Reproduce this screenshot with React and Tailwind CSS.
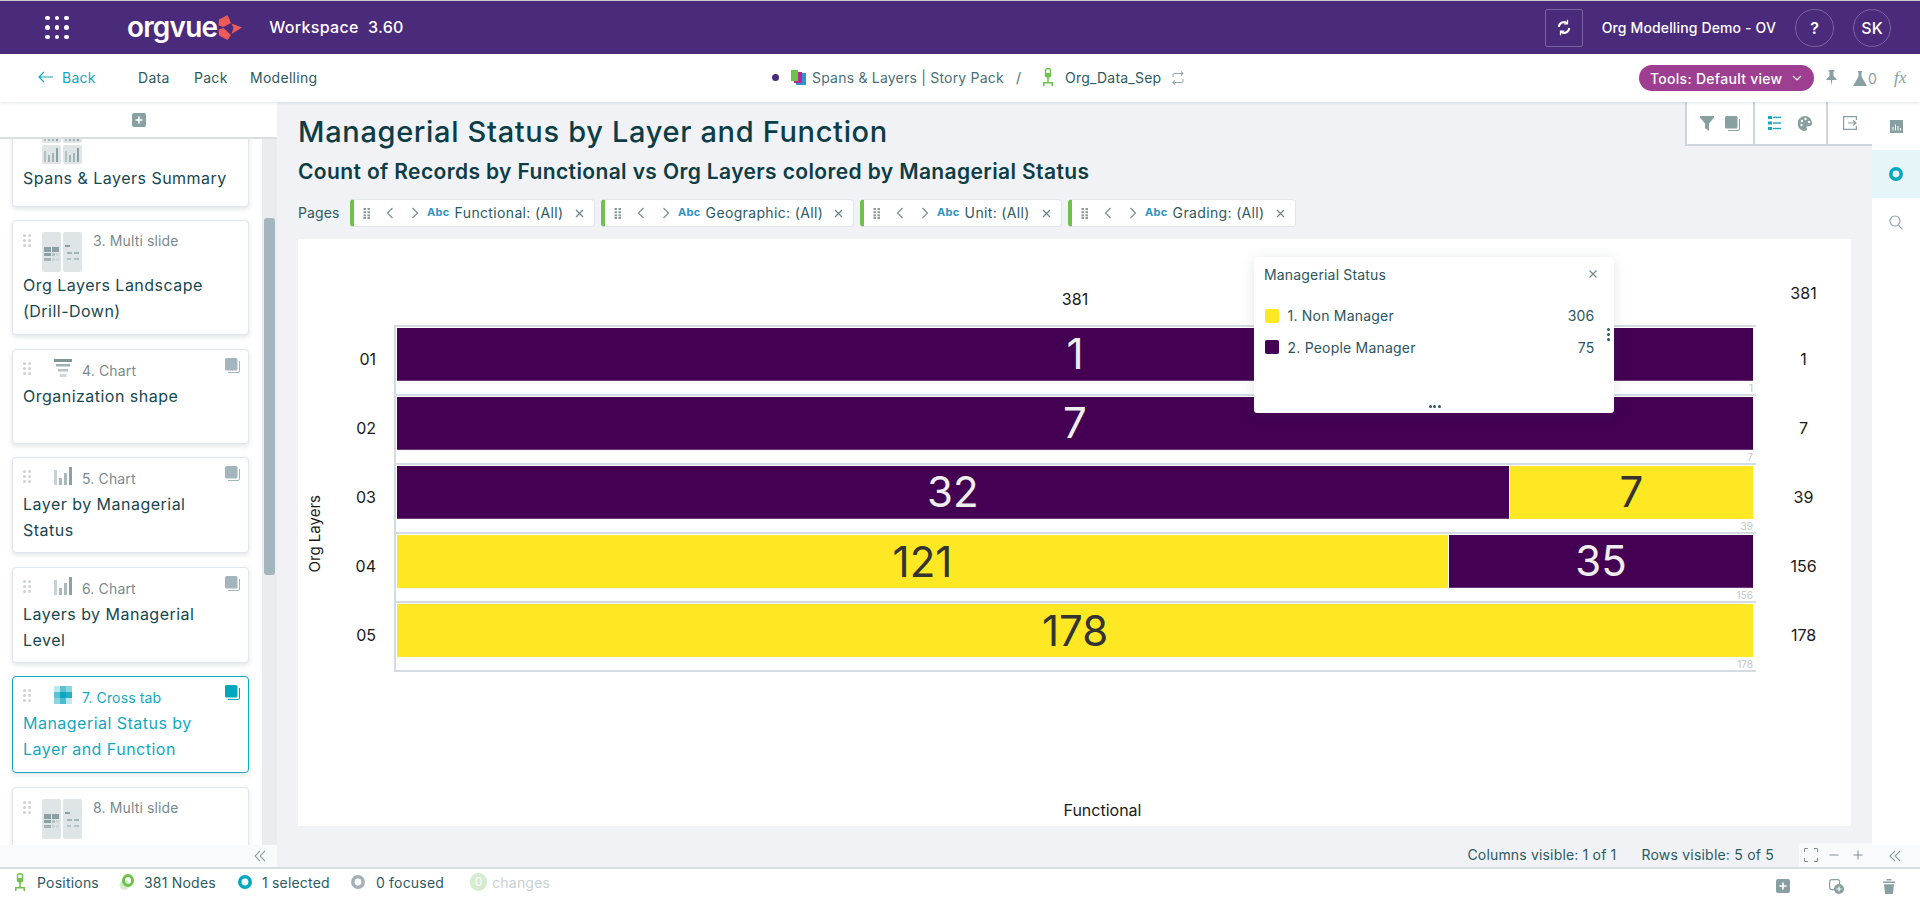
import React from "react";

const Handle = ({ c = "#c9d2d6" }) => (
  <svg width="8" height="13" viewBox="0 0 8 13" className="shrink-0">
    {[1.5, 6.5, 11.5].map((y) => [1.5, 6.5].map((x) => <circle key={x + "-" + y} cx={x} cy={y} r="1.5" fill={c} />))}
  </svg>
);

const Stack = ({ c = "#a3b5bd" }) => (
  <svg width="15" height="15" viewBox="0 0 15 15" className="shrink-0">
    <rect x="0" y="0" width="12.5" height="12.5" rx="1.5" fill={c} />
    <path d="M14.5 3v10a1.5 1.5 0 0 1-1.5 1.5H3" fill="none" stroke={c} strokeWidth="1" />
  </svg>
);

const MultiThumb = () => (
  <svg width="40" height="40" viewBox="0 0 40 40" className="shrink-0">
    <rect x="0" y="0" width="19" height="40" rx="2" fill="#dfe5e7" />
    <rect x="21" y="0" width="19" height="40" rx="2" fill="#dfe5e7" />
    <rect x="2" y="15" width="7" height="5" fill="#8aa0a3" />
    <rect x="10" y="15" width="7" height="5" fill="#8aa0a3" />
    <rect x="2" y="21" width="7" height="3" fill="#8aa0a3" />
    <rect x="10" y="21" width="3" height="3" fill="#b5c2c5" />
    <rect x="14" y="21" width="3" height="3" fill="#cdd6d8" />
    <rect x="2" y="26" width="7" height="3" fill="#a3b3b6" />
    <rect x="10" y="26" width="3" height="3" fill="#cdd6d8" />
    <rect x="14" y="26" width="3" height="3" fill="#cdd6d8" />
    <rect x="23" y="13" width="5" height="2" fill="#8aa0a3" />
    <rect x="25" y="20" width="5" height="2" fill="#a3b3b6" />
    <rect x="32" y="20" width="5" height="2" fill="#a3b3b6" />
    <rect x="25" y="26" width="4" height="2" fill="#b5c2c5" />
    <rect x="32" y="26" width="5" height="2" fill="#b5c2c5" />
  </svg>
);

const SummaryThumb = () => (
  <svg width="40" height="40" viewBox="0 0 40 40" className="shrink-0">
    {[0, 21].map((x) => [0, 21].map((y) => (
      <g key={x + "-" + y}>
        <rect x={x} y={y} width="19" height="19" rx="2" fill="#dfe5e7" />
        <rect x={x + 2} y={y + 6} width="2" height="11" fill="#b5c2c5" />
        <rect x={x + 6} y={y + 10} width="2" height="7" fill="#a3b3b6" />
        <rect x={x + 10} y={y + 8} width="2" height="9" fill="#a3b3b6" />
        <rect x={x + 14} y={y + 3} width="2" height="14" fill="#8aa0a3" />
      </g>
    )))}
  </svg>
);

const FunnelThumb = () => (
  <svg width="18" height="18" viewBox="0 0 18 18" className="shrink-0">
    <rect x="0" y="0" width="18" height="3" fill="#7e9699" />
    <rect x="2" y="5" width="14" height="2.5" fill="#9fb1b4" />
    <rect x="4" y="10" width="10" height="2.5" fill="#b5c3c6" />
    <rect x="5.5" y="15" width="7" height="3" fill="#cdd8da" />
  </svg>
);

const BarsThumb = () => (
  <svg width="18" height="18" viewBox="0 0 18 18" className="shrink-0">
    <rect x="0" y="3" width="3" height="15" fill="#c5d1d4" />
    <rect x="5" y="11" width="3" height="7" fill="#a8b8bb" />
    <rect x="10" y="6" width="3" height="12" fill="#a8b8bb" />
    <rect x="15" y="0" width="3" height="18" fill="#8aa0a3" />
  </svg>
);

const CrossThumb = () => (
  <svg width="18" height="18" viewBox="0 0 18 18" className="shrink-0">
    <rect x="0" y="0" width="18" height="18" fill="#bfe7ee" />
    <rect x="6" y="0" width="6" height="6" fill="#5cc3d4" />
    <rect x="12" y="0" width="6" height="6" fill="#8bd5e1" />
    <rect x="0" y="6" width="6" height="6" fill="#5cc3d4" />
    <rect x="6" y="6" width="6" height="6" fill="#0ea5bd" />
    <rect x="12" y="6" width="6" height="6" fill="#22aec4" />
    <rect x="0" y="12" width="6" height="6" fill="#8bd5e1" />
    <rect x="6" y="12" width="6" height="6" fill="#4bbccf" />
  </svg>
);

const Card = ({ n, thumb, title, h, stack, active, titleCls }) => {
  const color = active ? "text-[#11a9bf]" : "text-[#17474f]";
  return (
    <div className={`w-[237px] shrink-0 bg-white rounded-[4px] border ${active ? "border-[#11a9bf]" : "border-[#e1e7ea]"} shadow-[0_2px_5px_rgba(60,80,90,0.16)] ${h}`}>
      {thumb === "multi" || thumb === "summary" ? (
        <div className="flex items-start pl-[10px] pt-[11px]">
          <div className="w-[8px] mt-[2px] mr-[11px]">{n && <Handle />}</div>
          {thumb === "multi" ? <MultiThumb /> : <SummaryThumb />}
          <span className="ml-[11px] -mt-[1px] text-[14px] leading-[20px] text-[#7a8a8e] tracking-[0.01em]">{n}</span>
        </div>
      ) : (
        <div className="flex items-start pl-[10px] pr-[8px] pt-[8px] h-[33px]">
          <div className="w-[8px] mt-[4px] mr-[23px]"><Handle /></div>
          <div className="mt-[1px]">{thumb}</div>
          <span className={`ml-[10px] text-[14px] leading-[20px] mt-[3px] ${active ? "text-[#11a9bf]" : "text-[#7a8a8e]"} tracking-[0.01em]`}>{n}</span>
          {stack && <div className="ml-auto"><Stack c={active ? "#00a7bd" : "#a3b5bd"} /></div>}
        </div>
      )}
      <div className={`px-[10px] text-[16px] leading-[26px] tracking-[0.03em] ${color} ${titleCls || ""}`}>{title}</div>
    </div>
  );
};

const Chip = ({ label, w }) => (
  <div className={`h-[28px] flex items-center bg-white rounded-[4px] border border-[#e3e7ec] border-l-[4px] border-l-[#6cc24a] ${w}`}>
    <span className="ml-[9px]">
      <svg width="8" height="11" viewBox="0 0 8 11"><g fill="#8a9a9d">{[1, 4.2, 7.4, 10].map((y) => <g key={y}><rect x="0.5" y={y - 1} width="2.5" height="2" /><rect x="4.5" y={y - 1} width="2.5" height="2" /></g>)}</g></svg>
    </span>
    <svg width="8" height="12" viewBox="0 0 8 12" className="ml-[15px]"><path d="M6.5 1 1.5 6l5 5" fill="none" stroke="#7d8f92" strokeWidth="1.2" /></svg>
    <svg width="8" height="12" viewBox="0 0 8 12" className="ml-[17px]"><path d="M1.5 1l5 5-5 5" fill="none" stroke="#7d8f92" strokeWidth="1.2" /></svg>
    <span className="ml-[8px] -mt-[1px] text-[11px] font-bold text-[#2f93c4] tracking-[0.03em]">Abc</span>
    <span className="ml-[5px] -mt-[1px] text-[14px] text-[#2c5a62] tracking-[0.025em] whitespace-nowrap">{label}</span>
    <svg width="9" height="9" viewBox="0 0 9 9" className="ml-auto mr-[10px]"><path d="M1 1l7 7M8 1 1 8" stroke="#6f8488" strokeWidth="1.2" fill="none" /></svg>
  </div>
);

const rows = [
  { label: "01", total: 1, segs: [{ v: 1, k: "p" }] },
  { label: "02", total: 7, segs: [{ v: 7, k: "p" }] },
  { label: "03", total: 39, segs: [{ v: 32, k: "p" }, { v: 7, k: "y" }] },
  { label: "04", total: 156, segs: [{ v: 121, k: "y" }, { v: 35, k: "p" }] },
  { label: "05", total: 178, segs: [{ v: 178, k: "y" }] },
];

const Ring = ({ c }) => (
  <svg width="14" height="14" viewBox="0 0 14 14" className="shrink-0">
    <circle cx="7" cy="7" r="5.2" fill="none" stroke={c} strokeWidth="3.5" />
  </svg>
);

const Chair = () => (
  <svg width="10" height="18" viewBox="0 0 10 18" className="shrink-0">
    <rect x="2.5" y="0.7" width="5" height="8" rx="1.5" fill="none" stroke="#6cc24a" strokeWidth="1.4" />
    <rect x="2.5" y="5" width="5" height="4" fill="#6cc24a" />
    <rect x="4.2" y="9" width="1.6" height="5" fill="#6cc24a" />
    <path d="M0 14h10v1.5H0zM0 15.5h1.5V18H0zM8.5 15.5H10V18H8.5z" fill="#6cc24a" />
  </svg>
);

const Chevrons = () => (
  <svg width="12" height="12" viewBox="0 0 12 12"><path d="M6 1 1 6l5 5M11 1 6 6l5 5" fill="none" stroke="#8aa0a3" strokeWidth="1.1" /></svg>
);

const PlusSquare = () => (
  <svg width="14" height="14" viewBox="0 0 14 14"><rect width="14" height="14" rx="2" fill="#88a0a2" /><path d="M7 3.5v7M3.5 7h7" stroke="#fff" strokeWidth="1.6" /></svg>
);

const Y = "#fee723";

export default function App() {
  return (
    <div className="w-[1920px] h-[902px] overflow-hidden flex flex-col bg-white font-[family-name:Inter,sans-serif] text-[#17474f]">
      <div className="h-px bg-[#c9c9cc] shrink-0" />
      {/* header */}
      <header className="h-[53px] shrink-0 bg-[#4a2a7b] flex items-center text-white">
        <div className="ml-[45px] grid grid-cols-3 gap-x-[5px] gap-y-[5px] w-[24px] shrink-0">
          {Array.from({ length: 9 }).map((_, i) => <span key={i} className="w-[4.6px] h-[4.6px] rounded-full bg-white block" />)}
        </div>
        <span className="ml-[58px] text-[28px] leading-[36px] font-semibold tracking-[-0.03em] -mt-[1px]">orgvue</span>
        <svg width="24" height="25" viewBox="0 0 24 25" className="ml-[1px] -mt-[1px]">
          <path d="M1 4.5 9.5 0 13 8 5.5 12 .5 10.5zM.5 14.5 5.5 13 13 20l-3.5 5L1 20.5zM13.5 8.5 24 12.5 13.5 19 15.5 13z" fill="#ec5b57" />
        </svg>
        <span className="ml-[27px] -mt-[2px] text-[16px] font-medium whitespace-pre tracking-[0.02em]">Workspace  3.60</span>
        <div className="ml-auto w-[38px] h-[38px] border border-[#7a64a0] rounded-[2px] flex items-center justify-center">
          <svg width="14" height="17" viewBox="0 0 14 17" fill="none" stroke="#fff" strokeWidth="2"><path d="M12.2 9a5.2 5.2 0 0 1-8.6 3.6M1.8 8a5.2 5.2 0 0 1 8.6-3.6" /><path d="M10.5 .8v4H6.8M3.5 16.2v-4h3.7" strokeWidth="1.3" /></svg>
        </div>
        <span className="ml-[19px] text-[14px] font-medium tracking-[0.01em] whitespace-nowrap">Org Modelling Demo - OV</span>
        <div className="ml-[19px] w-[39px] h-[38px] rounded-full border border-[#7a64a0] flex items-center justify-center text-[16px] font-semibold">?</div>
        <div className="ml-[19px] mr-[29px] w-[38px] h-[38px] rounded-full border border-[#7a64a0] flex items-center justify-center text-[16px] font-medium">SK</div>
      </header>
      {/* toolbar */}
      <div className="h-[48px] shrink-0 bg-white flex items-center relative z-10 shadow-[0_1px_3px_rgba(40,60,70,0.14)]">
        <svg width="15" height="12" viewBox="0 0 15 12" className="ml-[38px] -mt-[2px]"><path d="M15 6H1M6 1 1 6l5 5" fill="none" stroke="#13a8bf" strokeWidth="1.2" /></svg>
        <span className="ml-[9px] -mt-[2px] text-[14px] text-[#13a8bf] tracking-[0.02em] w-[76px]">Back</span>
        <span className="-mt-[1px] text-[14px] text-[#2c5a62] tracking-[0.02em] w-[56px]">Data</span>
        <span className="-mt-[1px] text-[14px] text-[#2c5a62] tracking-[0.02em] w-[56px]">Pack</span>
        <span className="-mt-[1px] text-[14px] text-[#2c5a62] tracking-[0.02em] w-[522px]">Modelling</span>
        <span className="-mt-[2px] w-[7px] h-[7px] rounded-full bg-[#4a2a7b] shrink-0" />
        <svg width="15" height="15" viewBox="0 0 15 15" className="ml-[12px] -mt-[2px] shrink-0"><rect x="5" y="3" width="10" height="12" fill="#2f93d4" /><rect x="3" y="2" width="8" height="11" fill="#b5288f" /><rect x="0" y="0" width="7" height="11" fill="#6cc24a" /></svg>
        <span className="ml-[6px] -mt-[2px] text-[14px] text-[#4a7077] tracking-[0.015em] whitespace-nowrap w-[204px]">Spans &amp; Layers | Story Pack</span>
        <span className="-mt-[2px] text-[14px] text-[#4a7077] w-[27px]">/</span>
        <div className="-mt-[2px]"><Chair /></div>
        <span className="ml-[12px] -mt-[2px] text-[14px] text-[#2c5a62] tracking-[0.015em]">Org_Data_Sep</span>
        <svg width="12" height="14" viewBox="0 0 12 14" className="ml-[11px] -mt-[1px]" fill="none" stroke="#9aacaf" strokeWidth="1.1"><path d="M1 6V4a1.5 1.5 0 0 1 1.5-1.5H11M9 .5l2 2-2 2M11 8v2a1.5 1.5 0 0 1-1.5 1.5H1M3 9.5l-2 2 2 2" /></svg>
        <div className="ml-auto h-[26px] w-[175px] rounded-full bg-[#9e3e91] text-white text-[14px] font-medium tracking-[0.02em] flex items-center pl-[11px] shrink-0 whitespace-nowrap">
          Tools: Default view
          <svg width="10" height="6" viewBox="0 0 10 6" className="ml-[9px]"><path d="M1 1l4 4 4-4" fill="none" stroke="#fff" strokeWidth="1.2" /></svg>
        </div>
        <svg width="11" height="16" viewBox="0 0 11 16" className="ml-[12px] shrink-0"><path d="M2.5 0h6v1L7.5 2v4l3 3v1H6.2L5.5 16l-.7-6H.5V9l3-3V2l-1-1z" fill="#88a0a2" /></svg>
        <svg width="14" height="15" viewBox="0 0 14 15" className="ml-[16px] shrink-0"><path d="M5 0h4v1L8.5 1.5v4L14 15H0L5.5 5.5v-4L5 1z" fill="#88a0a2" /></svg>
        <span className="ml-[1px] text-[14px] text-[#88a0a2] w-[26px]">0</span>
        <span className="mr-[11px] text-[17px] italic text-[#88a0a2] font-[family-name:'Liberation_Serif',serif] w-[15px]">fx</span>
      </div>
      {/* body */}
      <div className="flex flex-1 min-h-0 bg-[#f0f2f5]">
        {/* sidebar */}
        <aside className="w-[277px] shrink-0 flex flex-col bg-white">
          <div className="h-[37px] shrink-0 flex items-center justify-center border-b-2 border-[#d9dee1]"><PlusSquare /></div>
          <div className="flex-1 min-h-0 flex overflow-hidden">
            <div className="w-[262px] pl-[12px] flex flex-col gap-[13.5px]">
              <div className="-mt-[27.5px]"><Card n="" thumb="summary" h="h-[95px]" title="Spans & Layers Summary" titleCls="mt-[1px]" /></div>
              <Card n="3. Multi slide" thumb="multi" h="h-[115px]" title={<>Org Layers Landscape<br />(Drill-Down)</>} />
              <Card n="4. Chart" thumb={<FunnelThumb />} h="h-[95px]" stack title="Organization shape" />
              <Card n="5. Chart" thumb={<BarsThumb />} h="h-[96px]" stack title={<>Layer by Managerial<br />Status</>} />
              <Card n="6. Chart" thumb={<BarsThumb />} h="h-[96px]" stack title={<>Layers by Managerial<br />Level</>} />
              <Card n="7. Cross tab" thumb={<CrossThumb />} h="h-[97px]" stack active title={<>Managerial Status by<br />Layer and Function</>} />
              <Card n="8. Multi slide" thumb="multi" h="h-[115px]" title="" />
            </div>
            <div className="w-[15px] bg-[#e9edf0] flex justify-center">
              <div className="w-[11px] h-[357px] mt-[79px] bg-[#a3b5bd] rounded-[3px]" />
            </div>
          </div>
          <div className="h-[22px] shrink-0 bg-[#f9fafb] flex items-center justify-end pr-[11px]"><Chevrons /></div>
        </aside>
        {/* main */}
        <main className="flex-1 min-w-0 flex flex-col">
          <div className="h-[48px] flex justify-between items-start pl-[21px] shrink-0">
            <h1 className="mt-[12px] text-[29px] leading-[36px] font-medium tracking-[0.023em] text-[#0d3d47] whitespace-nowrap">Managerial Status by Layer and Function</h1>
            <div className="h-[44px] w-[187px] bg-white border-l-2 border-b-2 border-[#ccd6db] flex items-center">
              <div className="w-[68px] h-full border-r-2 border-[#ccd6db] flex items-center pl-[13px] gap-[11px]">
                <svg width="14" height="15" viewBox="0 0 14 15"><path d="M0 0h14v1.5L9 7.5V15L5 12V7.5L0 1.5z" fill="#88a0a2" /></svg>
                <svg width="15" height="15" viewBox="0 0 15 15"><rect width="12.5" height="12.5" rx="1.5" fill="#88a0a2" /><path d="M14.5 3v10a1.5 1.5 0 0 1-1.5 1.5H3" fill="none" stroke="#88a0a2" /></svg>
              </div>
              <div className="w-[73px] h-full border-r-2 border-[#ccd6db] flex items-center pl-[13px] gap-[17px]">
                <svg width="13" height="14" viewBox="0 0 13 14"><g fill="#13a8bf"><rect y="0" width="4" height="3" /><rect y="5.5" width="4" height="3" /><rect y="11" width="4" height="3" /><rect x="5" y="0.7" width="8" height="1.4" /><rect x="5" y="6.3" width="8" height="1.4" /><rect x="5" y="11.8" width="8" height="1.4" /></g></svg>
                <svg width="14" height="15" viewBox="0 0 14 15"><path d="M7 0a7 7 0 0 1 7 7.3c0 2.2-1.6 3-3 3H9.5c-.9 0-1.2 1-.8 1.7.5 1 .2 3-1.7 3A7 7 0 0 1 7 0z" fill="#88a0a2" /><circle cx="4" cy="5" r="1.2" fill="#fff" /><circle cx="7.5" cy="3" r="1.2" fill="#fff" /><circle cx="11" cy="6" r="1.2" fill="#fff" /><circle cx="3.5" cy="9" r="1.2" fill="#fff" /></svg>
              </div>
              <div className="flex-1 flex items-center justify-center">
                <svg width="14" height="14" viewBox="0 0 14 14" fill="none" stroke="#88a0a2" strokeWidth="1.2"><path d="M13.4 4V.6H.6v12.8h12.8V10M5 7h8M10 4.5 13 7l-3 2.5" /></svg>
              </div>
            </div>
          </div>
          <h2 className="ml-[21px] mt-[8px] h-[28px] text-[21px] leading-[28px] font-semibold tracking-[0.018em] text-[#0d3d47] whitespace-nowrap shrink-0">Count of Records by Functional vs Org Layers colored by Managerial Status</h2>
          <div className="ml-[21px] mt-[13px] h-[28px] flex items-center shrink-0">
            <span className="-mt-[1px] text-[14px] text-[#2c5a62] tracking-[0.01em] w-[52px]">Pages</span>
            <Chip label="Functional: (All)" w="w-[245px]" />
            <div className="w-[6px]" />
            <Chip label="Geographic: (All)" w="w-[253px]" />
            <div className="w-[6px]" />
            <Chip label="Unit: (All)" w="w-[202px]" />
            <div className="w-[6px]" />
            <Chip label="Grading: (All)" w="w-[228px]" />
          </div>
          {/* chart */}
          <section className="relative ml-[21px] mt-[12px] w-[1553px] h-[587px] bg-white flex shrink-0 text-[#1a1a1a]">
            <div className="w-[34px] shrink-0 flex items-center justify-center pt-[2px]">
              <span className="[writing-mode:vertical-rl] rotate-180 text-[15px] leading-[20px] whitespace-nowrap">Org Layers</span>
            </div>
            <div className="flex-1 flex flex-col min-w-0">
              <div className="h-[85.5px] flex shrink-0">
                <div className="w-[62px]" />
                <div className="w-[1362px] pt-[50px] text-center text-[16px] leading-[20px]">381</div>
                <div className="w-[95px] pt-[44px] text-center text-[16px] leading-[20px]">381</div>
              </div>
              <div className="flex">
                <div className="w-[62px] shrink-0">
                  {rows.map((r) => (
                    <div key={r.label} className="h-[69.2px] pr-[18px] pt-[22px] text-right text-[16px] leading-[24px]">{r.label}</div>
                  ))}
                </div>
                <div className="w-[1362px] shrink-0 border-l-2 border-t-2 border-[#d3dce2]">
                  {rows.map((r) => (
                    <div key={r.label} className="h-[69.2px] border-b-2 border-[#d3dce2] pl-px pr-[3px] pt-[1px] box-border">
                      <div className="h-[53px] flex gap-px">
                        {r.segs.map((s, i) => (
                          <div key={i} style={{ flexGrow: s.v, flexBasis: 0, backgroundColor: s.k === "p" ? "#440154" : Y }} className={`flex items-center justify-center text-[42px] leading-none ${s.k === "p" ? "text-[#eeeeee] border-b border-[#6b3a78]" : "text-[#333333]"}`}>{s.v}</div>
                        ))}
                      </div>
                      <div className="text-right text-[10px] leading-[14px] text-[#c4c4c4]">{r.total}</div>
                    </div>
                  ))}
                </div>
                <div className="w-[95px] shrink-0">
                  {rows.map((r) => (
                    <div key={r.label} className="h-[69.2px] pt-[22px] text-center text-[16px] leading-[24px]">{r.total}</div>
                  ))}
                </div>
              </div>
              <div className="mt-auto h-[26px] pl-[22px] text-center text-[16px] leading-[20px]">Functional</div>
            </div>
            {/* legend */}
            <div className="absolute left-[955.5px] top-[18px] w-[360px] h-[156px] bg-white rounded-[3px] shadow-[0_2px_14px_rgba(60,80,90,0.14)] text-[#2c5561] z-10">
              <div className="flex items-center justify-between pl-[10.5px] pr-[17px] pt-[7px] h-[27px]">
                <span className="text-[14px] tracking-[0.012em]">Managerial Status</span>
                <svg width="8" height="8" viewBox="0 0 8 8"><path d="M.5.5l7 7M7.5.5l-7 7" stroke="#6f8488" strokeWidth="1.1" /></svg>
              </div>
              <div className="mt-[16px] pl-[11px] pr-[19px] flex items-center h-[31px] text-[14px] tracking-[0.015em]">
                <span className="w-[14px] h-[14px] rounded-[2px] bg-[#fee723]" />
                <span className="ml-[9px]">1. Non Manager</span>
                <span className="ml-auto">306</span>
              </div>
              <div className="pl-[11px] pr-[19px] flex items-center h-[32px] text-[14px] tracking-[0.015em]">
                <span className="w-[14px] h-[14px] rounded-[2px] bg-[#440154]" />
                <span className="ml-[9px]">2. People Manager</span>
                <span className="ml-auto">75</span>
              </div>
              <div className="absolute right-[4px] top-[71px] flex flex-col gap-[2px]">
                {[0, 1, 2].map((i) => <span key={i} className="w-[3px] h-[3px] rounded-full bg-[#2c5561]" />)}
              </div>
              <div className="absolute left-[175px] bottom-[5px] flex gap-[1.5px]">
                {[0, 1, 2].map((i) => <span key={i} className="w-[3px] h-[3px] rounded-full bg-[#2c5561]" />)}
              </div>
            </div>
          </section>
          <div className="flex-1 flex items-end justify-end">
            <span className="text-[14px] text-[#2c5a62] tracking-[0.012em] whitespace-nowrap mb-[2px]">Columns visible: 1 of 1</span>
            <span className="ml-[25px] text-[14px] text-[#2c5a62] tracking-[0.015em] whitespace-nowrap mb-[2px]">Rows visible: 5 of 5</span>
            <div className="ml-[25px] w-[73px] h-[24px] bg-[#f9fafb] rounded-tl-[4px] flex items-center pl-[5px]">
              <svg width="14" height="14" viewBox="0 0 14 14" fill="none" stroke="#7d9093" strokeWidth="1"><path d="M.5 4V.5H4M10 .5h3.5V4M13.5 10v3.5H10M4 13.5H.5V10" /></svg>
              <svg width="10" height="10" viewBox="0 0 10 10" className="ml-[11px]"><path d="M.5 5h9" stroke="#7d9093" /></svg>
              <svg width="10" height="10" viewBox="0 0 10 10" className="ml-[14px]"><path d="M.5 5h9M5 .5v9" stroke="#7d9093" /></svg>
            </div>
          </div>
        </main>
        {/* rail */}
        <nav className="w-[48px] shrink-0 bg-white flex flex-col">
          <div className="h-[48px] flex items-center justify-center">
            <svg width="13" height="13" viewBox="0 0 13 13"><rect width="13" height="13" fill="#88a0a2" /><path d="M3 7v3.5M5.5 4.5v6M8 6v4.5M10.5 8v2.5" stroke="#fff" strokeWidth="1" /></svg>
          </div>
          <div className="h-[48px] bg-[#e6f6f8] flex items-center justify-center"><Ring c="#00a7bd" /></div>
          <div className="h-[48px] flex items-center justify-center">
            <svg width="14" height="15" viewBox="0 0 14 15" fill="none" stroke="#88a0a2" strokeWidth="1.1"><circle cx="6" cy="6" r="5" /><path d="M9.5 10l4 4.5" /></svg>
          </div>
          <div className="mt-auto h-[22px] bg-[#f9fafb] flex items-center justify-center pr-[2px]"><Chevrons /></div>
        </nav>
      </div>
      {/* status */}
      <footer className="h-[35px] shrink-0 bg-white border-t-2 border-[#d9dee1] pb-[7px] flex items-center text-[14px] text-[#2c5a62] tracking-[0.015em]">
        <span className="ml-[15px]"><Chair /></span>
        <span className="ml-[12px] whitespace-nowrap">Positions</span>
        <svg width="16" height="17" viewBox="0 0 16 17" className="ml-[20px] shrink-0"><circle cx="5.5" cy="11" r="5" fill="#d5ecd0" /><ellipse cx="9" cy="6.5" rx="4.5" ry="5" fill="none" stroke="#6cc24a" strokeWidth="3" /></svg>
        <span className="ml-[9px] whitespace-nowrap">381 Nodes</span>
        <span className="ml-[22px]"><Ring c="#00a7bd" /></span>
        <span className="ml-[10px] whitespace-nowrap">1 selected</span>
        <span className="ml-[21px]"><Ring c="#a3b1b6" /></span>
        <span className="ml-[11px] whitespace-nowrap">0 focused</span>
        <span className="ml-[26px] w-[17px] h-[18px] rounded-full bg-[#d5ecd0] text-white text-[12px] flex items-center justify-center">0</span>
        <span className="ml-[5px] text-[#c6d1d1] whitespace-nowrap">changes</span>
        <div className="ml-auto flex items-center gap-[39px] mr-[25px] mt-[8px]">
          <PlusSquare />
          <svg width="15" height="15" viewBox="0 0 15 15"><rect x=".6" y=".6" width="10" height="10" rx="2" fill="none" stroke="#88a0a2" strokeWidth="1.2" /><circle cx="10" cy="10" r="5" fill="#88a0a2" /><path d="M10 7.5v5M7.5 10h5" stroke="#fff" strokeWidth="1.2" /></svg>
          <svg width="12" height="15" viewBox="0 0 12 15"><path d="M3.5 0h5v1.4h-5zM0 2.6h12V4H0zM1 5.2h10L10 15H2z" fill="#88a0a2" /></svg>
        </div>
      </footer>
    </div>
  );
}
